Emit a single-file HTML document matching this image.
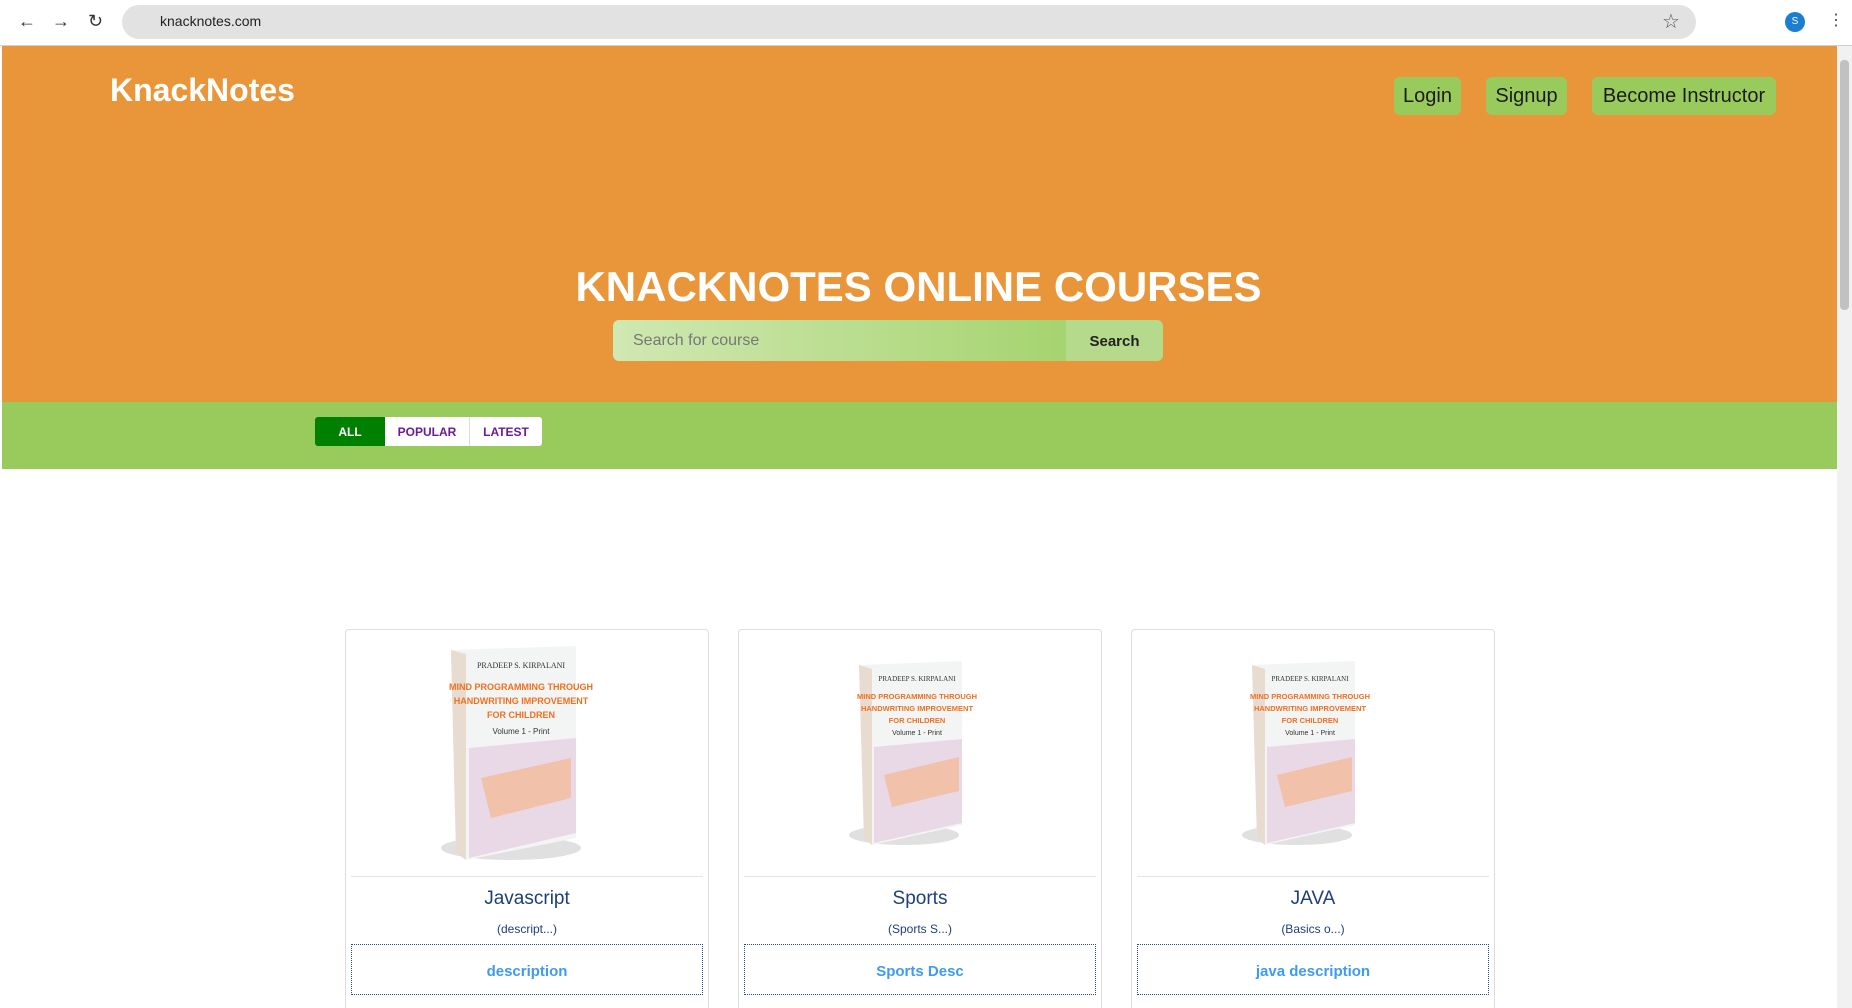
<!DOCTYPE html>
<html><head><meta charset="utf-8"><style>
*{box-sizing:border-box;margin:0;padding:0}
html,body{width:1852px;height:1008px;overflow:hidden}
body{background:#fff;font-family:"Liberation Sans",sans-serif;position:relative}
.abs{position:absolute}
.chrome{left:0;top:0;width:1852px;height:46px;background:#fff;border-bottom:1px solid #d0d0d0}
.url{left:122px;top:5px;width:1574px;height:34px;border-radius:17px;background:#e2e2e2}
.orange{left:2px;top:46px;width:1835px;height:356px;background:#e9963b}
.green{left:2px;top:402px;width:1835px;height:67px;background:#99cb5c}
.btn{background:#99cb5c;border-radius:6px;color:#1b1b1b;font-size:20px;display:flex;align-items:center;justify-content:center;height:38px;top:77px}
.card{border:1px solid #ddd;border-radius:4px;width:364px;top:629px;height:420px;background:#fff}
.card .div{position:absolute;left:5px;right:5px;top:246px;border-top:1px solid #e4e4e4}
.card .t{position:absolute;width:100%;text-align:center;top:258px;font-size:19px;color:#1e3f78}
.card .s{position:absolute;width:100%;text-align:center;top:292px;font-size:12px;color:#1e3f78}
.card .d{position:absolute;left:5px;right:5px;top:314px;height:51px;border:1px dotted #2a4a8a;color:#3f9af0;font-weight:bold;font-size:15px;display:flex;align-items:center;justify-content:center;padding-top:4px}
.book{position:absolute}
</style></head><body>
<div class="abs chrome"></div>
<div class="abs url"></div>
<div class="abs" style="left:18px;top:11px;font-size:18px;color:#333">←</div>
<div class="abs" style="left:52px;top:11px;font-size:18px;color:#333">→</div>
<div class="abs" style="left:88px;top:11px;font-size:18px;color:#333">↻</div>
<div class="abs" style="left:160px;top:13px;font-size:14px;color:#222">knacknotes.com</div>
<div class="abs" style="left:1662px;top:9px;font-size:20px;color:#555">☆</div>
<div class="abs" style="left:1785px;top:12px;width:20px;height:20px;border-radius:50%;background:#1a7fd0;color:#fff;font-size:10px;text-align:center;line-height:20px">S</div>
<div class="abs" style="left:1828px;top:10px;font-size:16px;color:#444">⋮</div>
<div class="abs orange"></div>
<div class="abs" style="left:1837px;top:46px;width:15px;height:962px;background:#f1f1f1"></div>
<div class="abs" style="left:1840px;top:60px;width:9px;height:250px;background:#c1c1c1;border-radius:4px"></div>
<div class="abs" style="left:110px;top:72px;font-size:32px;font-weight:bold;color:#fff">KnackNotes</div>
<div class="abs btn" style="left:1394px;width:67px">Login</div>
<div class="abs btn" style="left:1486px;width:81px">Signup</div>
<div class="abs btn" style="left:1592px;width:184px">Become Instructor</div>
<div class="abs" style="left:0;width:1837px;top:263px;text-align:center;font-size:42px;font-weight:bold;color:#fff">KNACKNOTES ONLINE COURSES</div>
<div class="abs" style="left:613px;top:320px;width:550px;height:41px;border-radius:6px;overflow:hidden;display:flex">
<div style="width:453px;background:linear-gradient(90deg,#d0e8b3,#a6d46f);color:#777;font-size:16px;padding:12px 20px">Search for course</div>
<div style="flex:1;background:#b6da8b;font-weight:bold;font-size:15px;color:#222;display:flex;align-items:center;justify-content:center;padding-top:2px">Search</div>
</div>
<div class="abs green"></div>
<div class="abs" style="left:315px;top:417px;height:29px;display:flex;font-size:12px;font-weight:bold;border-radius:3px;overflow:hidden">
<div style="width:70px;background:#008000;color:#fff;display:flex;align-items:center;justify-content:center">ALL</div>
<div style="width:85px;background:#fff;color:#6a1b9a;display:flex;align-items:center;justify-content:center;border-right:1px solid #ddd">POPULAR</div>
<div style="width:72px;background:#fff;color:#6a1b9a;display:flex;align-items:center;justify-content:center">LATEST</div>
</div>

<div class="abs card" style="left:345px">
<svg class="book" style="left:75px;top:8px" width="200" height="230"><ellipse cx="90" cy="210" rx="70" ry="12" fill="#ccc" opacity=".6"/><polygon points="30,12 155,8 155,200 45,222 35,215" fill="#f3f4f4"/><polygon points="30,12 45,16 45,222 35,215" fill="#e8dcd0"/><text x="100" y="30" font-size="8" text-anchor="middle" fill="#333" font-family="Liberation Serif">PRADEEP S. KIRPALANI</text><text x="100" y="52" font-size="9" text-anchor="middle" fill="#f07020" font-weight="bold">MIND PROGRAMMING THROUGH</text><text x="100" y="66" font-size="9" text-anchor="middle" fill="#f07020" font-weight="bold">HANDWRITING IMPROVEMENT</text><text x="100" y="80" font-size="9" text-anchor="middle" fill="#f07020" font-weight="bold">FOR CHILDREN</text><text x="100" y="96" font-size="8" text-anchor="middle" fill="#333">Volume 1 - Print</text><polygon points="48,110 155,100 155,195 48,220" fill="#e9d8e6"/><polygon points="60,140 150,120 150,160 70,180" fill="#f5b890" opacity=".7"/></svg>
<div class="div"></div><div class="t">Javascript</div><div class="s">(descript...)</div><div class="d">description</div></div>

<div class="abs card" style="left:738px">
<svg class="book" style="left:95px;top:25px" width="170" height="200"><ellipse cx="70" cy="180" rx="55" ry="10" fill="#ccc" opacity=".6"/><polygon points="25,10 128,6 128,170 38,190 30,184" fill="#f3f4f4"/><polygon points="25,10 38,14 38,190 30,184" fill="#e8dcd0"/><text x="83" y="26" font-size="7" text-anchor="middle" fill="#333" font-family="Liberation Serif">PRADEEP S. KIRPALANI</text><text x="83" y="44" font-size="7.5" text-anchor="middle" fill="#f07020" font-weight="bold">MIND PROGRAMMING THROUGH</text><text x="83" y="56" font-size="7.5" text-anchor="middle" fill="#f07020" font-weight="bold">HANDWRITING IMPROVEMENT</text><text x="83" y="68" font-size="7.5" text-anchor="middle" fill="#f07020" font-weight="bold">FOR CHILDREN</text><text x="83" y="80" font-size="7" text-anchor="middle" fill="#333">Volume 1 - Print</text><polygon points="40,92 128,84 128,168 40,188" fill="#e9d8e6"/><polygon points="50,120 125,102 125,136 58,152" fill="#f5b890" opacity=".7"/></svg>
<div class="div"></div><div class="t">Sports</div><div class="s">(Sports S...)</div><div class="d">Sports Desc</div></div>

<div class="abs card" style="left:1131px">
<svg class="book" style="left:95px;top:25px" width="170" height="200"><ellipse cx="70" cy="180" rx="55" ry="10" fill="#ccc" opacity=".6"/><polygon points="25,10 128,6 128,170 38,190 30,184" fill="#f3f4f4"/><polygon points="25,10 38,14 38,190 30,184" fill="#e8dcd0"/><text x="83" y="26" font-size="7" text-anchor="middle" fill="#333" font-family="Liberation Serif">PRADEEP S. KIRPALANI</text><text x="83" y="44" font-size="7.5" text-anchor="middle" fill="#f07020" font-weight="bold">MIND PROGRAMMING THROUGH</text><text x="83" y="56" font-size="7.5" text-anchor="middle" fill="#f07020" font-weight="bold">HANDWRITING IMPROVEMENT</text><text x="83" y="68" font-size="7.5" text-anchor="middle" fill="#f07020" font-weight="bold">FOR CHILDREN</text><text x="83" y="80" font-size="7" text-anchor="middle" fill="#333">Volume 1 - Print</text><polygon points="40,92 128,84 128,168 40,188" fill="#e9d8e6"/><polygon points="50,120 125,102 125,136 58,152" fill="#f5b890" opacity=".7"/></svg>
<div class="div"></div><div class="t">JAVA</div><div class="s">(Basics o...)</div><div class="d">java description</div></div>
</body></html>
